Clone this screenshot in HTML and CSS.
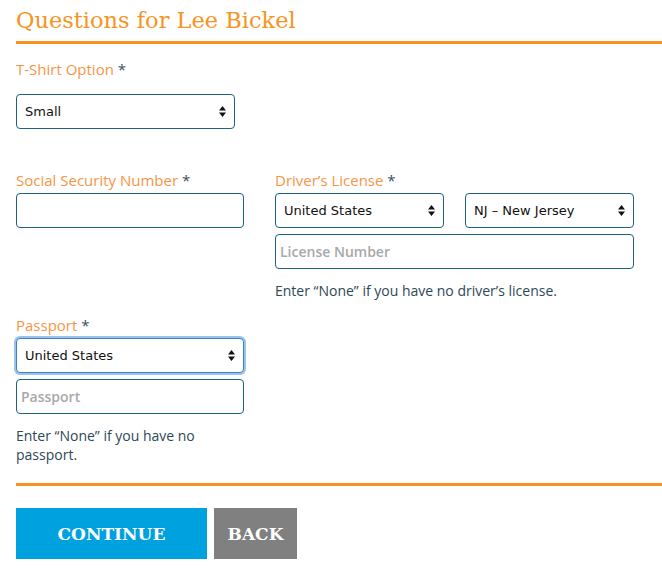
FILE: index.html
```html
<!DOCTYPE html>
<html>
<head>
<meta charset="utf-8">
<link rel="stylesheet" href="styles.css">
</head>
<body>
<div class="page">
  <h1 class="title">Questions for Lee Bickel</h1>
  <div class="rule"></div>

  <div class="field tshirt">
    <div class="label">T-Shirt Option <span class="req">*</span></div>
    <div class="select w-tshirt"><span>Small</span><svg class="arr" width="7" height="11" viewBox="0 0 7 11"><path d="M3.5 0L7 4.5H0Z M0 6.5H7L3.5 11Z" fill="#111"/></svg></div>
  </div>

  <div class="row">
    <div class="col1">
      <div class="label">Social Security Number <span class="req">*</span></div>
      <div class="input"></div>

      <div class="label passport-label">Passport <span class="req">*</span></div>
      <div class="select focused"><span>United States</span><svg class="arr" width="7" height="11" viewBox="0 0 7 11"><path d="M3.5 0L7 4.5H0Z M0 6.5H7L3.5 11Z" fill="#111"/></svg></div>
      <div class="input gap"><span class="ph">Passport</span></div>
      <p class="help">Enter “None” if you have no passport.</p>
    </div>
    <div class="col2">
      <div class="label">Driver’s License <span class="req">*</span></div>
      <div class="pair">
        <div class="select w-half"><span>United States</span><svg class="arr" width="7" height="11" viewBox="0 0 7 11"><path d="M3.5 0L7 4.5H0Z M0 6.5H7L3.5 11Z" fill="#111"/></svg></div>
        <div class="select w-half"><span>NJ – New Jersey</span><svg class="arr" width="7" height="11" viewBox="0 0 7 11"><path d="M3.5 0L7 4.5H0Z M0 6.5H7L3.5 11Z" fill="#111"/></svg></div>
      </div>
      <div class="input gap"><span class="ph">License Number</span></div>
      <p class="help">Enter “None” if you have no driver’s license.</p>
    </div>
  </div>

  <div class="rule rule2"></div>

  <div class="buttons">
    <div class="btn continue">CONTINUE</div>
    <div class="btn back">BACK</div>
  </div>
</div>
</body>
</html>
```

FILE: styles.css
```css
html, body {
  margin: 0;
  padding: 0;
  background: #fff;
}
.page {
  padding-left: 16px;
  font-family: "Open Sans", "DejaVu Sans", sans-serif;
}
.title {
  margin: 0;
  padding-top: 5px;
  height: 36px;
  font-family: "DejaVu Serif", serif;
  font-weight: normal;
  font-size: 22.5px;
  line-height: 30px;
  color: #f7941d;
}
.rule {
  height: 3px;
  background: #f7931e;
}
.label {
  font-size: 15px;
  line-height: 20px;
  color: #f79545;
}
.req {
  color: #37515f;
}
.tshirt {
  margin-top: 15px;
}
.tshirt .label {
  margin-bottom: 15px;
}
.select, .input {
  box-sizing: border-box;
  height: 35px;
  border: 1px solid #1d6283;
  border-radius: 4px;
  background: #fff;
  display: flex;
  align-items: center;
  padding: 0 8px 0 8px;
  font-size: 14px;
  color: #111;
}
.select span {
  flex: 1;
  font-family: "DejaVu Sans", sans-serif;
  font-size: 13px;
}
.input {
  padding-left: 4px;
}
.ph {
  color: #a8a8a8;
  font-weight: 600;
  font-size: 14px;
}
.arr {
  flex: none;
}
.w-tshirt {
  width: 219px;
}
.row {
  display: flex;
  gap: 31px;
  margin-top: 41px;
}
.col1 {
  width: 228px;
}
.col2 {
  width: 359px;
}
.row .label {
  margin-bottom: 3px;
}
.pair {
  display: flex;
  justify-content: space-between;
}
.w-half {
  width: 169px;
}
.gap {
  margin-top: 6px;
}
.passport-label {
  margin-top: 87px;
}
.focused {
  border-color: #3b82c4;
  box-shadow: 0 0 0 2px #9cc3ef;
}
.help {
  margin: 12px 0 0 0;
  font-size: 14px;
  line-height: 19px;
  color: #2d4857;
}
.rule2 {
  margin-top: 19px;
}
.buttons {
  display: flex;
  gap: 7px;
  margin-top: 22px;
}
.btn {
  height: 51px;
  display: flex;
  align-items: center;
  justify-content: center;
  font-family: "DejaVu Serif", serif;
  font-weight: bold;
  font-size: 17px;
  color: #fff;
}
.continue {
  width: 191px;
  background: #00a1df;
}
.back {
  width: 83px;
  background: #808080;
}
```
